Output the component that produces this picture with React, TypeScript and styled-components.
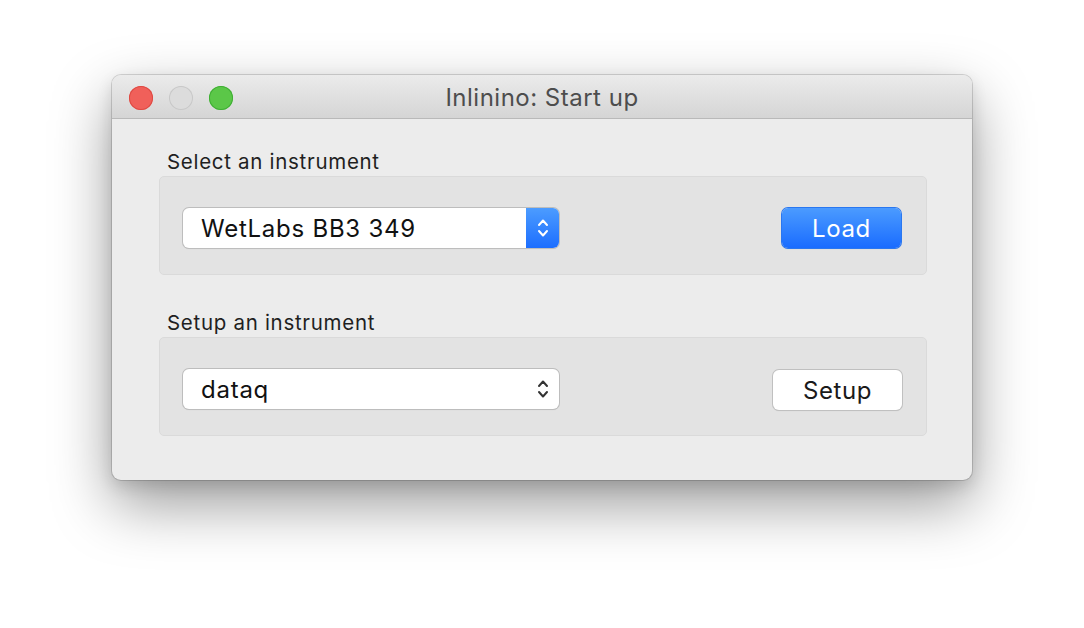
import React from "react";
import styled, { createGlobalStyle } from "styled-components";

const Global = createGlobalStyle`
  html, body { margin: 0; padding: 0; background: #ffffff; }
  body { font-family: Inter, "Helvetica Neue", "Liberation Sans", sans-serif; }
`;

const Page = styled.div`
  width: 1084px;
  height: 628px;
  padding: 75px 0 0 112px;
  box-sizing: border-box;
  overflow: hidden;
`;

const Window = styled.div`
  width: 860px;
  height: 405px;
  border-radius: 9px;
  background: #ececec;
  box-shadow: 0 0 0 1px rgba(0,0,0,0.14), 0 24px 60px rgba(0,0,0,0.4), 0 6px 16px rgba(0,0,0,0.12);
  display: flex;
  flex-direction: column;
  overflow: hidden;
`;

const TitleBar = styled.div`
  height: 43px;
  flex: none;
  border-bottom: 1px solid #b9b9b9;
  background: linear-gradient(#ebebeb, #d5d5d5);
  display: flex;
  align-items: center;
  position: relative;
`;

const Lights = styled.div`
  display: flex;
  gap: 16px;
  position: absolute;
  left: 17px;
  top: 11px;
`;

const Light = styled.span<{ $c: string; $b: string }>`
  width: 24px;
  height: 24px;
  border-radius: 50%;
  background: ${(p) => p.$c};
  box-shadow: inset 0 0 0 1px ${(p) => p.$b};
`;

const Title = styled.div`
  flex: 1;
  text-align: center;
  font-size: 24px;
  color: #4d4d4d;
  letter-spacing: 0.5px;
  padding-top: 2px;
`;

const Content = styled.div`
  padding: 31px 45px 0 47px;
  display: flex;
  flex-direction: column;
`;

const Label = styled.div<{ $top: number }>`
  font-size: 20.5px;
  line-height: 24px;
  color: #1f1f1f;
  letter-spacing: 0.7px;
  padding-left: 8px;
  margin-top: ${(p) => p.$top}px;
  margin-bottom: 2px;
`;

const Box = styled.div`
  height: 99px;
  box-sizing: border-box;
  background: #e3e3e3;
  border: 1px solid #dadada;
  border-radius: 5px;
  display: flex;
  align-items: flex-start;
  justify-content: space-between;
  padding: 31px 24px 0 23px;
`;

const Popup = styled.div`
  width: 376px;
  height: 40px;
  box-sizing: border-box;
  background: #ffffff;
  border-radius: 6px;
  box-shadow: 0 0 0 1px #bdbdbd, 0 1px 1px rgba(0,0,0,0.12);
  display: flex;
  align-items: center;
  overflow: hidden;
`;

const PopupText = styled.div`
  flex: 1;
  padding-left: 18px;
  font-size: 24px;
  color: #111;
  letter-spacing: 0.75px;
`;

const Stepper = styled.div<{ $blue?: boolean }>`
  width: 33px;
  height: 100%;
  display: flex;
  align-items: center;
  justify-content: center;
  background: ${(p) => (p.$blue ? "linear-gradient(#4c9cff, #1c6eff)" : "transparent")};
  color: ${(p) => (p.$blue ? "#fff" : "#333")};
`;

const Button = styled.div<{ $primary?: boolean }>`
  height: 40px;
  box-sizing: border-box;
  border-radius: 6px;
  display: flex;
  align-items: center;
  justify-content: center;
  font-size: 24px;
  letter-spacing: 0.6px;
  ${(p) =>
    p.$primary
      ? `width: 119px; margin-right: 1px; background: linear-gradient(#4b9bff, #1a6cff); color: #fff; box-shadow: 0 0 0 1px #2a77f0, 0 1px 1px rgba(0,0,0,0.15);`
      : `width: 129px; margin-top: 1px; background: #fff; color: #1a1a1a; box-shadow: 0 0 0 1px #c0c0c0, 0 1px 1px rgba(0,0,0,0.14);`}
`;

const Chevrons = () => (
  <svg width="14" height="24" viewBox="0 0 14 24" fill="none" stroke="currentColor" strokeWidth="2" strokeLinecap="round" strokeLinejoin="round">
    <path d="M3 9 L7 4.5 L11 9" />
    <path d="M3 15 L7 19.5 L11 15" />
  </svg>
);

export default function App() {
  return (
    <>
      <Global />
      <Page>
        <Window>
          <TitleBar>
            <Lights>
              <Light $c="#f0605a" $b="#de4a43" />
              <Light $c="#dcdcdc" $b="#c8c8c8" />
              <Light $c="#5bc748" $b="#3fae34" />
            </Lights>
            <Title>Inlinino: Start up</Title>
          </TitleBar>
          <Content>
            <Label $top={0}>Select an instrument</Label>
            <Box>
              <Popup>
                <PopupText>WetLabs BB3 349</PopupText>
                <Stepper $blue>
                  <Chevrons />
                </Stepper>
              </Popup>
              <Button $primary>Load</Button>
            </Box>
            <Label $top={36}>Setup an instrument</Label>
            <Box>
              <Popup>
                <PopupText>dataq</PopupText>
                <Stepper>
                  <Chevrons />
                </Stepper>
              </Popup>
              <Button>Setup</Button>
            </Box>
          </Content>
        </Window>
      </Page>
    </>
  );
}
